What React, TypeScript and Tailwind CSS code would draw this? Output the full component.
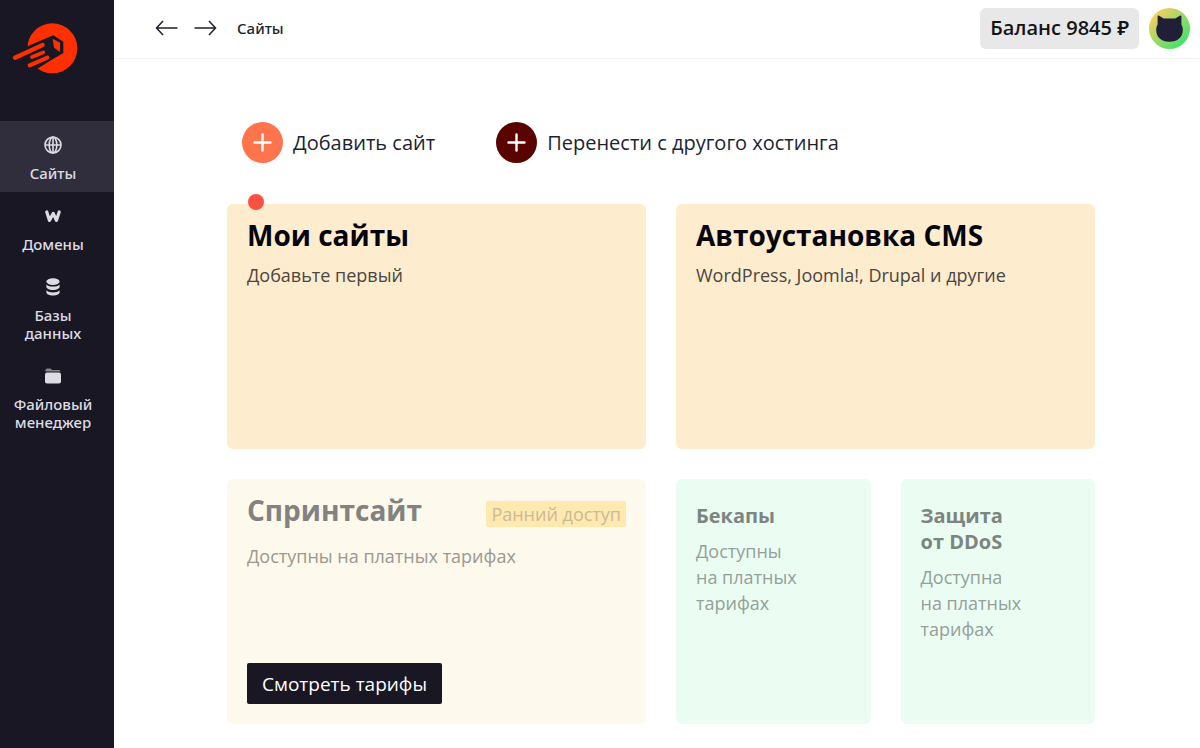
import React from 'react';

type NavItemType = {
  label: string;
  icon: React.ReactNode;
  active?: boolean;
};

const GlobeIcon: React.FC = () => (
  <svg width="18" height="18" viewBox="0 0 18 18" fill="none" stroke="currentColor" strokeWidth="1.6">
    <circle cx="9" cy="9" r="8" />
    <ellipse cx="9" cy="9" rx="3.8" ry="8" />
    <path d="M1 9h16M9 1v16" />
  </svg>
);

const DomainIcon: React.FC = () => (
  <svg width="18" height="18" viewBox="0 0 18 18" fill="none" stroke="currentColor" strokeWidth="3.2" strokeLinecap="round" strokeLinejoin="round">
    <path d="M2.8 5 5.4 13.4 9.2 6.4 12.4 13.4 15.2 5" />
  </svg>
);

const DatabaseIcon: React.FC = () => (
  <svg width="18" height="18" viewBox="0 0 18 18" fill="currentColor">
    <ellipse cx="9" cy="3.6" rx="6.6" ry="3.4" />
    <path d="M2.4 6.4c1.4 1.600 3.8 2.200 6.600 2.200s5.200-.6 6.600-2.200v2.400c0 1.800-2.900 3.200-6.600 3.200s-6.600-1.400-6.600-3.200z" />
    <path d="M2.4 12.2c1.4 1.600 3.8 2.200 6.600 2.200s5.200-.6 6.600-2.200v2c0 1.900-2.900 3.300-6.600 3.300s-6.600-1.400-6.600-3.300z" />
  </svg>
);

const FolderIcon: React.FC = () => (
  <svg width="18" height="18" viewBox="0 0 18 18" fill="currentColor">
    <path opacity=".55" d="M1.5 4.4V3A1.6 1.6 0 0 1 3 1.4h3.4l1.8 1.6h6.6a1.6 1.6 0 0 1 1.6 1.4z" />
    <rect x="1" y="5.4" width="16" height="11.2" rx="2" />
  </svg>
);

const Logo: React.FC = () => (
  <svg width="66" height="54" viewBox="36 66 198 162" aria-hidden="true">
    <circle cx="157" cy="145" r="75" fill="#ff3000" />
    <path d="M70 144 160 106 190 125V159L158 178 112 206 60 204z" fill="#191724" />
    <path d="M158 116 180 128V156L162 143z" fill="#ff3000" />
    <g stroke="#ff3000" strokeLinecap="round">
      <path d="M45 173 128 135" strokeWidth="13" />
      <path d="M96 171 130 157" strokeWidth="11" />
      <path d="M89 196 142 173" strokeWidth="12" />
    </g>
  </svg>
);

const Avatar: React.FC = () => (
  <svg width="41" height="41" viewBox="0 0 41 41" aria-hidden="true">
    <defs>
      <linearGradient id="avatar" x1="0" y1="0" x2="1" y2="1">
        <stop offset=".15" stopColor="#f3cf62" />
        <stop offset=".85" stopColor="#45e26b" />
      </linearGradient>
    </defs>
    <circle cx="20.5" cy="20.5" r="20.5" fill="url(#avatar)" />
    <path
      d="M8.6 8.500c0-1 .8-1.200 1.500-.7l4.700 2.800h11.400l4.700-2.800c.7-.5 1.500-.3 1.500.7v8c1 1.700 1.400 3.500 1.400 5.500 0 7.300-5.300 11.700-13.300 11.700S7.200 29.300 7.200 22c0-2 .4-3.800 1.400-5.500z"
      fill="#211f38"
    />
  </svg>
);

const Arrow: React.FC<{ back?: boolean }> = ({ back }) => (
  <svg width="23" height="16" viewBox="0 0 23 16" fill="none" stroke="currentColor" strokeWidth="1.5">
    <path d={back ? 'M22.5 8H1.5M8 1 1.5 8 8 15' : 'M.5 8h21M15 1l6.5 7L15 15'} />
  </svg>
);

const navItems: NavItemType[] = [
  { label: 'Сайты', icon: <GlobeIcon />, active: true },
  { label: 'Домены', icon: <DomainIcon /> },
  { label: 'Базы данных', icon: <DatabaseIcon /> },
  { label: 'Файловый менеджер', icon: <FolderIcon /> },
];

const NavItem: React.FC<NavItemType> = ({ label, icon, active }) => (
  <a
    href="#"
    className={`flex flex-col items-center gap-[10px] pt-[15px] pr-5 pb-[10px] pl-3 text-center text-[15px] leading-[18px] font-medium text-[#dddce2] ${
      active ? 'bg-[#302e3c]' : ''
    }`}
  >
    {icon}
    <span>{label}</span>
  </a>
);

const AddButton: React.FC<{ label: string; color: string }> = ({ label, color }) => (
  <button type="button" className="flex items-center gap-[10px] text-xl font-medium text-[#211f33]">
    <span className={`flex h-[41px] w-[41px] items-center justify-center rounded-full ${color}`}>
      <svg width="19" height="19" viewBox="0 0 19 19" stroke="#fff" strokeWidth="2.4" strokeLinecap="round">
        <path d="M9.5 1.5v16M1.5 9.5h16" />
      </svg>
    </span>
    {label}
  </button>
);

const App: React.FC = () => {
  return (
    <div className="flex min-h-screen bg-white font-['Open_Sans','Noto_Sans',sans-serif]">
      <aside className="w-[114px] shrink-0 bg-[#191724] font-['Noto_Sans','Open_Sans',sans-serif]">
        <a href="#" aria-label="Главная" className="block h-[121px] pt-[22px] pl-3">
          <Logo />
        </a>
        <nav>
          {navItems.map((item) => (
            <NavItem key={item.label} {...item} />
          ))}
        </nav>
      </aside>

      <div className="min-w-0 flex-1">
        <header className="flex h-[59px] items-center justify-between border-b border-[#f2f2f2] pr-[10px] pb-[2px] pl-[41px] text-[#211f33]">
          <div className="flex items-center gap-4">
            <button type="button" aria-label="Назад">
              <Arrow back />
            </button>
            <button type="button" aria-label="Вперёд">
              <Arrow />
            </button>
            <span className="ml-1 font-['Noto_Sans','Open_Sans',sans-serif] text-[15px] font-medium">
              Сайты
            </span>
          </div>
          <div className="flex items-center gap-[10px]">
            <button
              type="button"
              className="h-[41px] rounded-md bg-[#e8e8e8] px-[10px] text-xl font-semibold text-[#141414]"
            >
              Баланс 9845 ₽
            </button>
            <Avatar />
          </div>
        </header>

        <main className="pt-[63px] pr-[105px] pb-6 pl-[113px]">
          <div className="flex gap-[61px] pl-[15px]">
            <AddButton label="Добавить сайт" color="bg-[#ff734d]" />
            <AddButton label="Перенести с другого хостинга" color="bg-[#590400]" />
          </div>

          <div className="mt-[41px] grid auto-rows-[245px] grid-cols-4 gap-[30px]">
            <section className="relative col-span-2 rounded-md bg-[#fdecce] px-5 pt-[11px]">
              <span className="absolute -top-[10px] left-[21px] h-4 w-4 rounded-full bg-[#ff4f40]" />
              <h2 className="text-[28px] leading-[40px] font-bold text-[#05040c]">Мои сайты</h2>
              <p className="mt-[7px] text-lg leading-[26px] text-[#4a4641]">Добавьте первый</p>
            </section>

            <section className="col-span-2 rounded-md bg-[#fdecce] px-5 pt-[11px]">
              <h2 className="text-[28px] leading-[40px] font-bold text-[#05040c]">Автоустановка CMS</h2>
              <p className="mt-[7px] text-lg leading-[26px] text-[#4a4641]">
                WordPress, Joomla!, Drupal и другие
              </p>
            </section>

            <section className="col-span-2 flex flex-col items-start rounded-md bg-[#fdf9ec] px-5 pt-[11px] pb-5">
              <div className="flex w-full items-center justify-between">
                <h2 className="text-[28px] leading-[40px] font-bold text-[#838281]">Спринтсайт</h2>
                <span className="mt-2 rounded-xs bg-[#ffe9ae] px-[5px] text-lg leading-[26px] text-[#c8bb99]">
                  Ранний доступ
                </span>
              </div>
              <p className="mt-[13px] text-lg leading-[26px] text-[#9a9890]">
                Доступны на платных тарифах
              </p>
              <button
                type="button"
                className="mt-auto h-[41px] rounded-xs bg-[#191724] px-[15px] pt-[2px] text-[19px] text-white"
              >
                Смотреть тарифы
              </button>
            </section>

            <section className="rounded-md bg-[#ebfdf2] px-5 pt-6">
              <h3 className="text-xl leading-[26px] font-bold text-[#7c8580]">Бекапы</h3>
              <p className="mt-[9px] text-lg leading-[26px] text-[#94a099]">
                Доступны
                <br />
                на платных
                <br />
                тарифах
              </p>
            </section>

            <section className="rounded-md bg-[#ebfdf2] px-5 pt-6">
              <h3 className="text-xl leading-[26px] font-bold text-[#7c8580]">
                Защита
                <br />
                от DDoS
              </h3>
              <p className="mt-[9px] text-lg leading-[26px] text-[#94a099]">
                Доступна
                <br />
                на платных
                <br />
                тарифах
              </p>
            </section>
          </div>
        </main>
      </div>
    </div>
  );
};

export default App;
